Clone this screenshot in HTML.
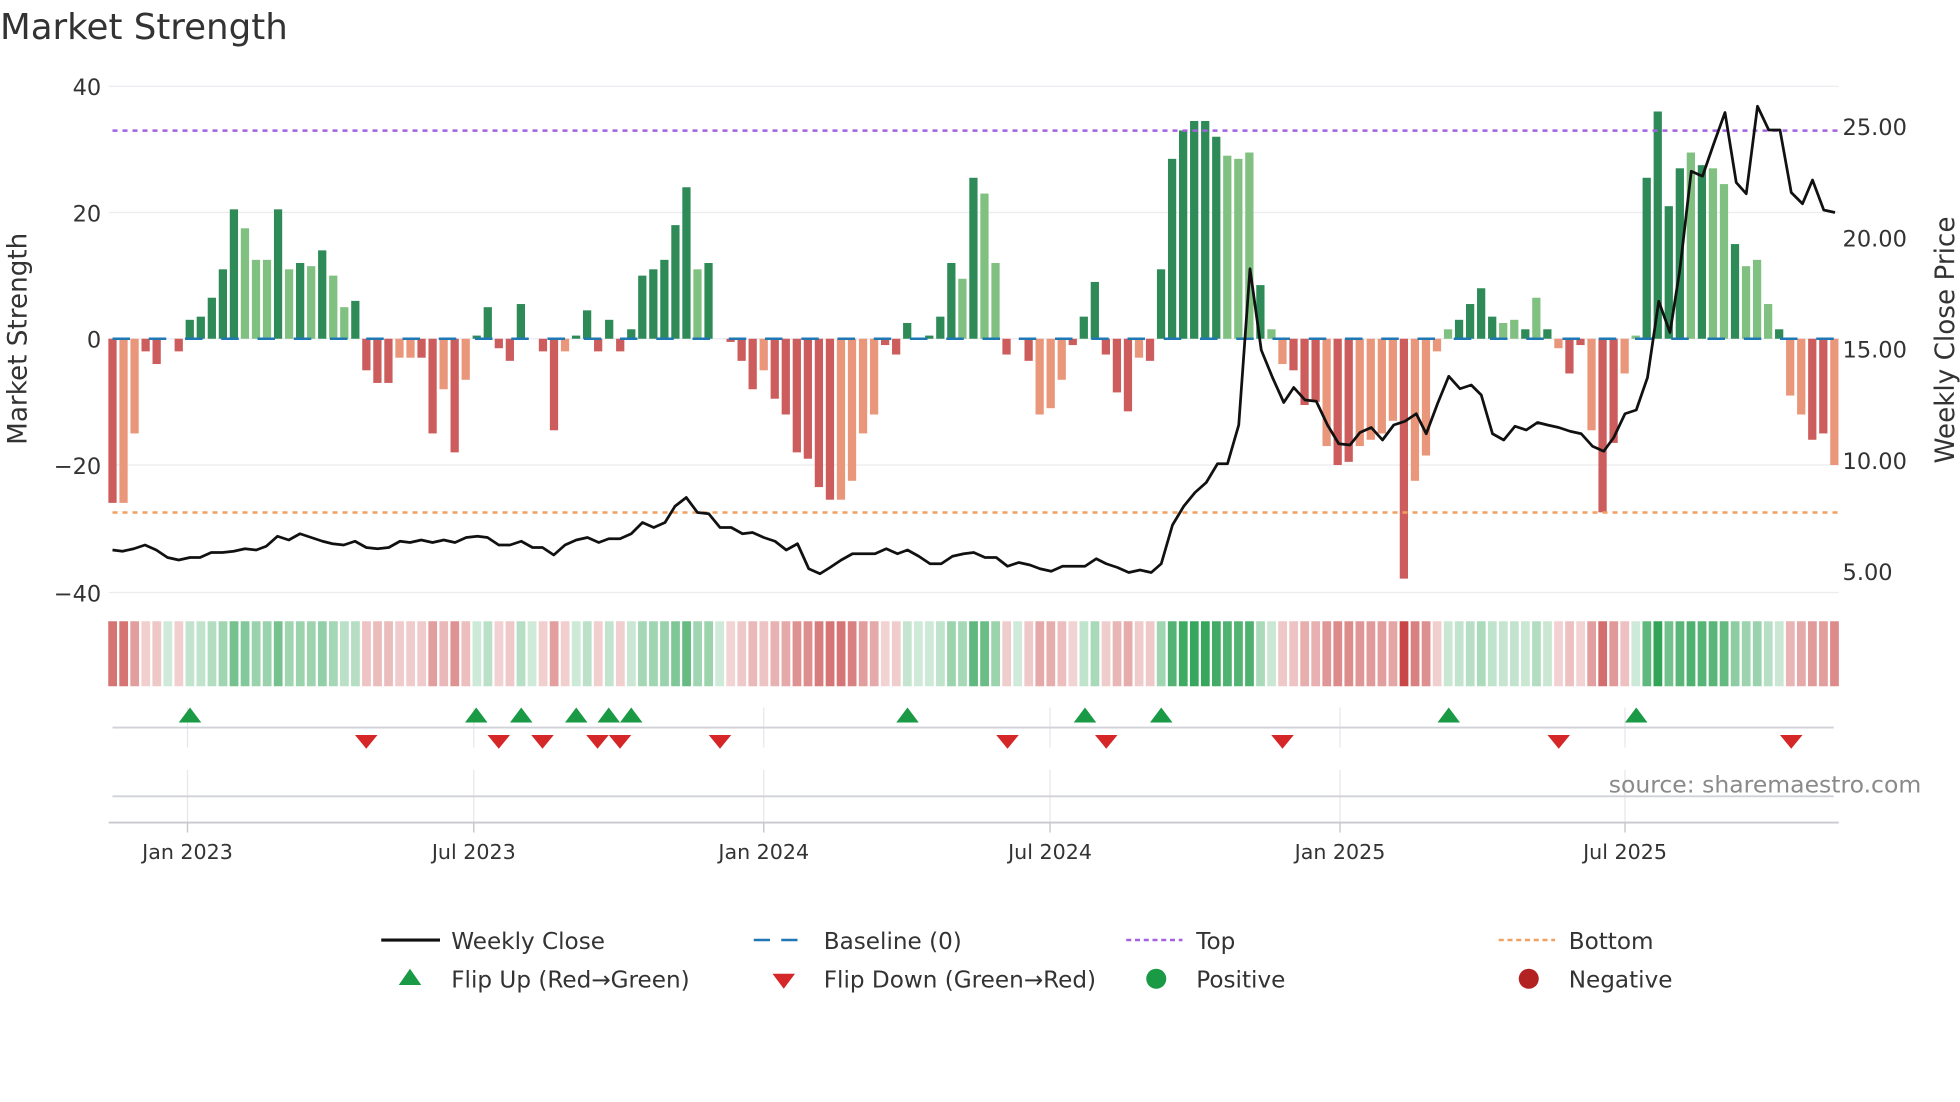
<!DOCTYPE html>
<html><head><meta charset="utf-8"><style>
html,body{margin:0;padding:0;background:#fff;}
svg{display:block;font-family:"DejaVu Sans","Liberation Sans",sans-serif;}
</style></head><body>
<svg id="s" width="1960" height="1102" viewBox="0 0 1568 881.6" xmlns="http://www.w3.org/2000/svg">
<rect width="1568" height="881.6" fill="#fff"/>
<text x="0" y="31" font-size="28.5" fill="#333">Market Strength</text>
<g stroke="#ececf0" stroke-width="1">
<line x1="87" x2="1471" y1="69" y2="69"/><line x1="87" x2="1471" y1="170" y2="170"/>
<line x1="87" x2="1471" y1="372" y2="372"/><line x1="87" x2="1471" y1="474" y2="474"/>
<line x1="87" x2="1471" y1="271" y2="271"/>
</g>
<g font-size="18" fill="#333" text-anchor="end">
<text x="81" y="76">40</text><text x="81" y="177">20</text><text x="81" y="278">0</text>
<text x="81" y="379">−20</text><text x="81" y="481">−40</text>
</g>
<g font-size="18" fill="#333">
<text x="1474" y="108">25.00</text><text x="1474" y="197">20.00</text><text x="1474" y="286">15.00</text>
<text x="1474" y="375">10.00</text><text x="1474" y="464">5.00</text>
</g>
<text transform="translate(21,271) rotate(-90)" font-size="21" fill="#333" text-anchor="middle">Market Strength</text>
<text transform="translate(1563,272) rotate(-90)" font-size="21" fill="#333" text-anchor="middle">Weekly Close Price</text>
<g id="bars"></g>
<line x1="90" x2="1471" y1="271" y2="271" stroke="#1f77b4" stroke-width="2" stroke-dasharray="14,15"/>
<line x1="90" x2="1471" y1="104.5" y2="104.5" stroke="#a461e0" stroke-width="2" stroke-dasharray="4,4"/>
<line x1="90" x2="1471" y1="410" y2="410" stroke="#f0a060" stroke-width="2" stroke-dasharray="4,4"/>
<polyline id="price" fill="none" stroke="#111" stroke-width="2.2" stroke-linejoin="round"/>
<g id="heat"></g>
<g stroke="#e6e6ec" stroke-width="1">
<line x1="150" x2="150" y1="566" y2="598"/><line x1="379" x2="379" y1="566" y2="598"/><line x1="611" x2="611" y1="566" y2="598"/>
<line x1="840" x2="840" y1="566" y2="598"/><line x1="1072" x2="1072" y1="566" y2="598"/><line x1="1300" x2="1300" y1="566" y2="598"/>
<line x1="150" x2="150" y1="616" y2="658"/><line x1="379" x2="379" y1="616" y2="658"/><line x1="611" x2="611" y1="616" y2="658"/>
<line x1="840" x2="840" y1="616" y2="658"/><line x1="1072" x2="1072" y1="616" y2="658"/><line x1="1300" x2="1300" y1="616" y2="658"/>
</g>
<line x1="90" x2="1467" y1="582" y2="582" stroke="#d0d2d8" stroke-width="1.5"/>
<line x1="90" x2="1467" y1="637" y2="637" stroke="#d0d2d8" stroke-width="1.5"/>
<line x1="87" x2="1471" y1="658" y2="658" stroke="#c8cad0" stroke-width="1.5"/>
<g stroke="#c8cad0" stroke-width="1.2">
<line x1="150" x2="150" y1="658" y2="666"/><line x1="379" x2="379" y1="658" y2="666"/><line x1="611" x2="611" y1="658" y2="666"/>
<line x1="840" x2="840" y1="658" y2="666"/><line x1="1072" x2="1072" y1="658" y2="666"/><line x1="1300" x2="1300" y1="658" y2="666"/>
</g>
<g id="marks"></g>
<text x="1537" y="634" font-size="18.8" fill="#8a8a8a" text-anchor="end">source: sharemaestro.com</text>
<g font-size="16.5" fill="#333" text-anchor="middle">
<text x="150" y="687">Jan 2023</text><text x="379" y="687">Jul 2023</text><text x="611" y="687">Jan 2024</text>
<text x="840" y="687">Jul 2024</text><text x="1072" y="687">Jan 2025</text><text x="1300" y="687">Jul 2025</text>
</g>
<g font-size="18.5" fill="#333">
<line x1="305" x2="352" y1="752" y2="752" stroke="#111" stroke-width="2.5"/>
<text x="361" y="759">Weekly Close</text>
<line x1="603" x2="647" y1="752" y2="752" stroke="#1f77b4" stroke-width="2" stroke-dasharray="13,9"/>
<text x="659" y="759">Baseline (0)</text>
<line x1="901" x2="946" y1="752" y2="752" stroke="#a461e0" stroke-width="2" stroke-dasharray="4,3"/>
<text x="957" y="759">Top</text>
<line x1="1199" x2="1244" y1="752" y2="752" stroke="#f0a060" stroke-width="2" stroke-dasharray="4,3"/>
<text x="1255" y="759">Bottom</text>
<polygon points="319,788 337,788 328,775" fill="#1a9a44"/>
<text x="361" y="790">Flip Up (Red→Green)</text>
<polygon points="618,779 636,779 627,791" fill="#d62728"/>
<text x="659" y="790">Flip Down (Green→Red)</text>
<circle cx="925" cy="783" r="8" fill="#1a9a44"/>
<text x="957" y="790">Positive</text>
<circle cx="1223" cy="783" r="8" fill="#b22222"/>
<text x="1255" y="790">Negative</text>
</g>
</svg>
<script>
var V=[-26,-26,-15,-2,-4,0,-2,3,3.5,6.5,11,20.5,17.5,12.5,12.5,20.5,11,12,11.5,14,10,5,6,-5,-7,-7,-3,-3,-3,-15,-8,-18,-6.5,0.5,5,-1.5,-3.5,5.5,0,-2,-14.5,-2,0.5,4.5,-2,3,-2,1.5,10,11,12.5,18,24,11,12,0,-0.5,-3.5,-8,-5,-9.5,-12,-18,-19,-23.5,-25.5,-25.5,-22.5,-15,-12,-1,-2.5,2.5,0,0.5,3.5,12,9.5,25.5,23,12,-2.5,0,-3.5,-12,-11,-6.5,-1,3.5,9,-2.5,-8.5,-11.5,-3,-3.5,11,28.5,33,34.5,34.5,32,29,28.5,29.5,8.5,1.5,-4,-5,-10.5,-10,-17,-20,-19.5,-17,-16,-15,-13,-38,-22.5,-18.5,-2,1.5,3,5.5,8,3.5,2.5,3,1.5,6.5,1.5,-1.5,-5.5,-1,-14.5,-27.5,-16.5,-5.5,0.5,25.5,36,21,27,29.5,27.5,27,24.5,15,11.5,12.5,5.5,1.5,-9,-12,-16,-15,-20];
var light={1:1,2:1,12:1,13:1,14:1,16:1,18:1,20:1,21:1,26:1,27:1,30:1,32:1,41:1,53:1,59:1,66:1,67:1,68:1,69:1,77:1,79:1,80:1,84:1,85:1,86:1,93:1,101:1,102:1,103:1,105:1,106:1,110:1,113:1,114:1,115:1,116:1,118:1,119:1,120:1,121:1,126:1,127:1,129:1,131:1,134:1,137:1,138:1,143:1,145:1,146:1,148:1,149:1,150:1,152:1,153:1,156:1};
var x0=90,dx=8.83,ns="http://www.w3.org/2000/svg",b=document.getElementById('bars'),h=document.getElementById('heat');
function el(t,a,p){var e=document.createElementNS(ns,t);for(var k in a)e.setAttribute(k,a[k]);p.appendChild(e);return e;}
for(var i=0;i<V.length;i++){var v=V[i],x=x0+i*dx,y0=271,y1=271-v*5.05;
var c=v>=0?(light[i]?'#80c080':'#2e8b57'):(light[i]?'#e9967a':'#cd5c5c');
if(v!=0)el('rect',{x:x-3.3,y:Math.min(y0,y1),width:6.6,height:Math.abs(y1-y0),fill:c},b);
var t=Math.min(1,Math.abs(v)/38),a=0.22+0.78*t,base=v>=0?[40,160,80]:[200,70,70];
var col='rgb('+base.map(function(q){return Math.round(255-(255-q)*a)}).join(',')+')';
el('rect',{x:x-3.4,y:497,width:7,height:52,fill:col},h);}
var P=[[90,440],[98,441],[107,439],[116,436],[125,440],[134,446],[143,448],[152,446],[160,446],[169,442],[178,442],[187,441],[196,439],[205,440],[213,437],[222,429],[231,432],[240,427],[249,430],[258,433],[266,435],[275,436],[284,433],[293,438],[302,439],[311,438],[320,433],[328,434],[337,432],[346,434],[355,432],[364,434],[373,430],[382,429],[390,430],[399,436],[408,436],[417,433],[426,438],[434,438],[443,444],[452,436],[461,432],[470,430],[479,434],[487,431],[496,431],[505,427],[514,418],[523,422],[532,418],[540,405],[549,398],[558,410],[567,411],[576,422],[585,422],[594,427],[602,426],[611,430],[620,433],[629,440],[638,435],[647,455],[656,459],[664,454],[673,448],[682,443],[691,443],[700,443],[709,439],[718,443],[726,440],[735,445],[744,451],[753,451],[762,445],[771,443],[779,442],[788,446],[797,446],[806,453],[815,450],[824,452],[832,455],[841,457],[850,453],[859,453],[868,453],[877,447],[885,451],[894,454],[903,458],[912,456],[921,458],[929,451],[938,420],[947,405],[956,394],[965,386],[974,371],[982,371],[991,340],[1000,215],[1009,280],[1018,302],[1027,322],[1035,310],[1044,320],[1053,321],[1062,340],[1071,355],[1080,356],[1088,346],[1097,342],[1106,352],[1115,340],[1124,337],[1133,331],[1141,347],[1150,323],[1159,301],[1168,311],[1177,308],[1185,316],[1194,347],[1203,352],[1212,341],[1221,344],[1230,338],[1238,340],[1247,342],[1256,345],[1265,347],[1274,357],[1283,361],[1291,350],[1300,331],[1309,328],[1318,302],[1327,241],[1336,266],[1344,215],[1353,137],[1362,141],[1371,115],[1380,90],[1389,146],[1397,155],[1406,85],[1415,104],[1424,104],[1433,154],[1442,163],[1450,144],[1459,168],[1468,170]];
document.getElementById('price').setAttribute('points',P.map(function(p){return p.join(',')}).join(' '));
var m=document.getElementById('marks');
[152,381,417,461,487,505,726,868,929,1159,1309].forEach(function(x){el('polygon',{points:(x-9)+',578 '+(x+9)+',578 '+x+',566',fill:'#1a9a44'},m);});
[293,399,434,478,496,576,806,885,1026,1247,1433].forEach(function(x){el('polygon',{points:(x-9)+',588 '+(x+9)+',588 '+x+',599',fill:'#d62728'},m);});
</script>
</body></html>
